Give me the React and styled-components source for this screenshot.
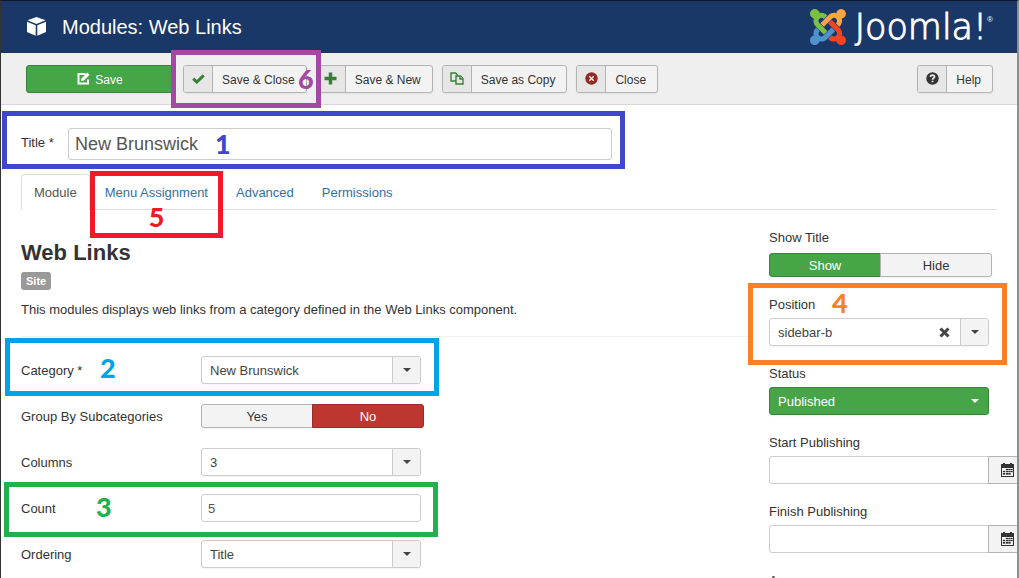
import React, { useState } from "react";
import styled, { createGlobalStyle, css } from "styled-components";

const GlobalStyle = createGlobalStyle`
  * {
    box-sizing: border-box;
  }
  html {
    overflow: hidden;
  }
  body {
    margin: 0;
    background: #fff;
    color: #333;
    font-family: "Liberation Sans", Arial, sans-serif;
    font-size: 13px;
    line-height: 20px;
  }
  button,
  input,
  select {
    margin: 0;
    font: inherit;
    color: inherit;
  }
`;

const Page = styled.div`
  height: 100vh;
  overflow: hidden;
  border: solid #333;
  border-width: 1px 2px 0 1px;
  border-top-color: #10182b;
  border-right-color: #8f8f8f;
`;
const Header = styled.header`
  display: flex;
  align-items: center;
  height: 52px;
  padding: 0 24px 0 25px;
  background: #1a3867;
  color: #fff;
`;
const Heading = styled.h1`
  flex: 1;
  margin: 0 0 0 15px;
  font-size: 20px;
  line-height: 24px;
  font-weight: normal;
`;
const Brand = styled.a`
  display: flex;
  align-items: center;
  color: #fff;
  text-decoration: none;
`;
const BrandName = styled.span`
  margin-left: 9px;
  font-family: "DejaVu Sans", sans-serif;
  font-weight: 200;
  font-size: 35px;
  line-height: 36px;
  -webkit-text-stroke: 1px #fff;
`;
const Registered = styled.sup`
  align-self: flex-start;
  font-size: 8px;
  line-height: 22px;
`;

const Toolbar = styled.div`
  display: flex;
  align-items: center;
  gap: 9px;
  height: 52px;
  padding: 0 24px 0 25px;
  background: #efefef;
  border-bottom: 1px solid #d8d8d8;
`;
const Spacer = styled.div`
  flex: 1;
`;
const ToolButton = styled.button`
  display: flex;
  align-items: center;
  height: 28px;
  padding: 0;
  overflow: hidden;
  background: #f3f3f3;
  border: 1px solid #b3b3b3;
  border-radius: 3px;
  box-shadow: 0 1px 2px rgba(0, 0, 0, 0.05);
  font-size: 12px;
  white-space: nowrap;
`;
const ToolIcon = styled.span`
  display: flex;
  align-items: center;
  justify-content: center;
  width: 29px;
  height: 26px;
  background: #e6e6e6;
  border-right: 1px solid #b3b3b3;
`;
const ToolText = styled.span`
  padding: 2px 11px 0 9px;
`;
const SaveButton = styled(ToolButton)`
  justify-content: center;
  gap: 5px;
  width: 148px;
  background: #46a546;
  border-color: #3a833a;
  color: #fff;
`;
const SaveText = styled.span`
  padding-top: 2px;
`;

/* numbered frame that lies over a part of the form */
const Mark = styled.span`
  position: absolute;
  top: ${(p) => p.$top}px;
  right: ${(p) => p.$right}px;
  bottom: ${(p) => p.$bottom}px;
  left: ${(p) => p.$left}px;
  border: 5px solid ${(p) => p.$color};
  color: ${(p) => p.$color};
  pointer-events: none;
  z-index: 5;
`;
const Digit = styled.b`
  position: absolute;
  top: ${(p) => p.$y}px;
  left: ${(p) => p.$x}px;
  font-family: Lato, sans-serif;
  font-weight: 900;
  font-size: 27px;
  line-height: 28px;
`;
const Marked = styled.div`
  position: relative;
`;

const Content = styled.main`
  padding: 23px 20px 0;
`;
const TitleRow = styled(Marked)`
  display: flex;
  width: 591px;
  max-width: 100%;
`;
const TitleLabel = styled.label`
  width: 47px;
  padding-top: 5px;
`;
const inputBase = css`
  border: 1px solid #ccc;
  border-radius: 3px;
  background: #fff;
  color: #555;
  outline: none;
`;
const TitleInput = styled.input`
  ${inputBase}
  flex: 1;
  min-width: 0;
  height: 32px;
  padding: 0 6px;
  font-size: 18px;
`;
const Tabs = styled.nav`
  display: flex;
  height: 36px;
  margin: 14px 0 18px;
  border-bottom: 1px solid #ddd;
`;
const Tab = styled.a`
  position: relative;
  height: 36px;
  margin-right: 2px;
  padding: 8px 12px 0;
  border: 1px solid transparent;
  border-radius: 4px 4px 0 0;
  color: #3071a9;
  text-decoration: none;
  ${(p) =>
    p.$active &&
    css`
      border-color: #ddd;
      border-bottom-color: #fff;
      background: #fff;
      color: #555;
    `}
`;

const Columns = styled.div`
  display: grid;
  grid-template-columns: minmax(0, 727fr) minmax(0, 228fr);
  gap: 21px;
`;
const ModuleName = styled.h2`
  margin: 13px 0 6px;
  font-size: 22px;
  line-height: 24px;
`;
const Badge = styled.span`
  display: inline-block;
  padding: 0 5px;
  background: #999;
  border-radius: 3px;
  color: #fff;
  font-size: 11px;
  font-weight: bold;
  line-height: 18px;
`;
const Description = styled.p`
  margin: 9px 0 16px;
`;
const Rule = styled.hr`
  margin: 0 0 19px;
  border: 0;
  border-top: 1px solid #eee;
`;
const Row = styled(Marked)`
  display: flex;
  align-items: center;
  height: 28px;
  margin-bottom: 18px;
`;
const RowLabel = styled.label`
  width: 180px;
  padding-top: 2px;
`;
const Field = styled(Marked)`
  margin-bottom: 18px;
`;
const FieldLabel = styled.label`
  display: block;
  margin-bottom: 3px;
`;
const TextInput = styled.input`
  ${inputBase}
  width: 220px;
  height: 28px;
  padding: 0 6px;
`;

const SelectWrap = styled.div`
  display: flex;
  position: relative;
  width: 220px;
`;
const SelectBox = styled.select`
  flex: 1;
  height: 28px;
  padding: 2px 8px 0;
  appearance: none;
  border: 1px solid ${(p) => (p.$green ? "#3a833a" : "#ccc")};
  border-radius: 3px;
  background: ${(p) => (p.$green ? "#46a546" : "#fff")};
  color: ${(p) => (p.$green ? "#fff" : "#444")};
  box-shadow: 0 1px 2px rgba(0, 0, 0, 0.05);
  outline: none;
`;
const SelectArrow = styled.span`
  position: absolute;
  top: 1px;
  right: 1px;
  bottom: 1px;
  display: flex;
  align-items: center;
  justify-content: center;
  width: 28px;
  border-left: 1px solid ${(p) => (p.$green ? "#46a546" : "#ccc")};
  border-radius: 0 2px 2px 0;
  background: ${(p) => (p.$green ? "#46a546" : "#f3f3f3")};
  color: ${(p) => (p.$green ? "#fff" : "#444")};
  pointer-events: none;
`;
const ClearButton = styled.button`
  position: absolute;
  top: 9px;
  right: 39px;
  display: flex;
  padding: 0;
  border: 0;
  background: none;
  color: #444;
`;

const Group = styled.div`
  display: flex;
  width: 223px;
  border-radius: 3px;
  box-shadow: 0 1px 2px rgba(0, 0, 0, 0.05);
  ${Field} & {
    margin-top: 5px;
  }
`;
const tones = {
  green: "background: #46a546; border-color: #3a833a; color: #fff;",
  red: "background: #bd362f; border-color: #9b2c27; color: #fff;",
};
const GroupButton = styled.button`
  flex: 1;
  height: 24px;
  padding: 2px 0 0;
  border: 1px solid #b3b3b3;
  background: #f3f3f3;
  &:first-child {
    border-radius: 3px 0 0 3px;
  }
  &:last-child {
    margin-left: -1px;
    border-radius: 0 3px 3px 0;
  }
  ${(p) => tones[p.$tone]}
`;

const DateRow = styled.div`
  display: flex;
  input {
    flex: none;
    border-radius: 3px 0 0 3px;
  }
`;
const DateButton = styled.button`
  display: flex;
  flex: none;
  align-items: center;
  justify-content: center;
  width: 38px;
  height: 28px;
  margin-left: -1px;
  padding: 0;
  border: 1px solid #b3b3b3;
  border-radius: 0 3px 3px 0;
  background: #f3f3f3;
`;

const CubeIcon = () => (
  <svg width="21" height="20" viewBox="0 1 21 20" fill="#fff">
    <path d="M10.5 1 19.5 4.3 10.5 8 1.5 4.3z" />
    <path d="M1 5.7 9.7 9.3V19.8L1 16z" />
    <path d="M20 5.7 11.3 9.3V19.8L20 16z" />
  </svg>
);
const JoomlaMark = () => (
  <svg width="36" height="36" viewBox="0 32 448 448">
    <path
      fill="#7ac143"
      d="M.6 92.1C.6 58.8 27.4 32 60.4 32c30 0 54.5 21.9 59.2 50.2 32.6-7.6 67.1.6 96.5 30l-44.3 44.3c-20.5-20.5-42.6-16.3-55.4-3.5-14.3 14.3-14.3 37.9 0 52.2l99.5 99.5-44 44.3c-87.7-87.2-49.7-49.7-99.8-99.7-26.8-26.5-35-64.8-24.8-98.9C20.4 144.6.6 120.7.6 92.1z"
    />
    <path
      fill="#f9a541"
      d="M130.1 208.5l44.3 44.3c10-10 89.7-89.7 99.7-99.8 14.3-14.3 37.6-14.3 51.9 0 12.8 12.8 17 35-3.5 55.4l44 44.3c31.2-31.2 38.5-67.6 28.9-101.2 29.2-4.1 51.9-29.2 51.9-59.5 0-33.2-26.8-60.1-59.8-60.1-30.3 0-55.4 22.5-59.5 51.6-33.8-9.9-71.7-1.5-98.3 25.1-18.3 19.1-71.1 71.5-99.6 99.9z"
    />
    <path
      fill="#f44321"
      d="M396.4 360.7c8.2-32.7-.9-68.5-26.3-93.9-11.8-12.2 5 4.7-99.5-99.7l-44.3 44.3 99.7 99.7c14.3 14.3 14.3 37.6 0 51.9-12.8 12.8-35 17-55.4-3.5l-44 44.3c27.6 30.2 68 38.8 102.7 28 5.5 27.4 29.7 48.1 58.9 48.1 33 0 59.8-26.8 59.8-60.1 0-30.2-22.5-55-51.6-59.1z"
    />
    <path
      fill="#5091cd"
      d="M312.1 307.6l-44-44.3c-87 86.4-50.4 50.4-99.7 99.8-14.3 14.3-37.6 14.3-51.9 0-13.1-13.4-16.9-35.3 3.2-55.4l-44-44.3c-30.2 30.2-38 65.2-29.5 98.3-26.7 6-46.2 29.9-46.2 58.2C0 453.2 26.8 480 59.8 480c28.6 0 52.5-19.8 58.6-46.7 32.7 8.2 68.5-.6 94.2-26 32.1-32 12.2-12.4 99.5-99.7z"
    />
  </svg>
);
const EditIcon = () => (
  <svg width="13" height="13" viewBox="0 0 13 13">
    <path d="M8.5 2h-7v9.5H11v-4" fill="none" stroke="#fff" strokeWidth="2" />
    <path d="M4 9l.6-2.8L10.4.4l2.3 2.3-5.8 5.7z" fill="#fff" />
  </svg>
);
const CheckIcon = () => (
  <svg width="13" height="10" viewBox="0 0 13 10">
    <path d="M1.2 4.6 4.8 8l6.9-6.7" fill="none" stroke="#378137" strokeWidth="3" />
  </svg>
);
const PlusIcon = () => (
  <svg width="13" height="13" viewBox="0 0 13 13">
    <path d="M6.5.5v12M.5 6.5h12" stroke="#378137" strokeWidth="3.5" />
  </svg>
);
const CopyIcon = () => (
  <svg width="14" height="13" viewBox="0 0 14 13" fill="#e6e6e6" stroke="#378137" strokeWidth="1.4">
    <path d="M1 1h4.500l2 2v6H1z" />
    <path d="M6 4h4.500L13 6.500V12H6z" />
    <path d="M10 4v3h3" />
  </svg>
);
const CloseIcon = () => (
  <svg width="13" height="13" viewBox="0 0 13 13">
    <circle cx="6.5" cy="6.5" r="6.2" fill="#942a25" />
    <path d="M4.3 4.3l4.4 4.4M8.7 4.3 4.3 8.7" stroke="#eee" strokeWidth="1.5" />
  </svg>
);
const HelpIcon = () => (
  <svg width="13" height="13" viewBox="0 0 13 13">
    <circle cx="6.5" cy="6.5" r="6.2" fill="#333" />
    <path
      d="M4.5 5c0-2.4 4-2.4 4-.2 0 1.4-2 1.4-2 2.9M6.500 8.800v1.500"
      fill="none"
      stroke="#e6e6e6"
      strokeWidth="1.8"
    />
  </svg>
);
const Caret = () => (
  <svg width="8" height="4" viewBox="0 0 8 4" fill="currentColor">
    <path d="M0 0h8L4 4z" />
  </svg>
);
const CrossIcon = () => (
  <svg width="11" height="11" viewBox="0 0 11 11">
    <path d="M1.5 1.5l8 8M9.500 1.500l-8 8" stroke="currentColor" strokeWidth="3" />
  </svg>
);
const CalendarIcon = () => (
  <svg width="13" height="14" viewBox="0 0 13 14">
    <path d="M0 1h13v13H0z" fill="#333" />
    <path d="M2 0h2v2H2zM9 0h2v2H9z" fill="#333" />
    <path d="M1 5h11v8H1z" fill="#f3f3f3" />
    <path
      d="M5 6h2v1H5zM7.5 6h2v1h-2zM10 6h1.500v1H10zM2 8h2v1H2zM5 8h2v1H5zM7.500 8h2v1h-2zM10 8h1.500v1H10zM2 10h2v1.500H2zM5 10h2v1.500H5zM7.500 10h2v1.500h-2z"
      fill="#333"
      stroke="#333"
      strokeWidth=".3"
    />
  </svg>
);

const Tool = ({ icon, children }) => (
  <ToolButton type="button">
    <ToolIcon>{icon}</ToolIcon>
    <ToolText>{children}</ToolText>
  </ToolButton>
);

const Select = ({ id, options, green, onClear }) => (
  <SelectWrap>
    <SelectBox id={id} $green={green}>
      {options.map((o) => (
        <option key={o}>{o}</option>
      ))}
    </SelectBox>
    {onClear && (
      <ClearButton type="button" aria-label="Clear" onClick={onClear}>
        <CrossIcon />
      </ClearButton>
    )}
    <SelectArrow $green={green}>
      <Caret />
    </SelectArrow>
  </SelectWrap>
);

const Switch = ({ labelledBy, options, value, onChange }) => (
  <Group role="group" aria-labelledby={labelledBy}>
    {options.map(([name, tone]) => (
      <GroupButton
        key={name}
        type="button"
        aria-pressed={value === name}
        $tone={value === name ? tone : undefined}
        onClick={() => onChange(name)}
      >
        {name}
      </GroupButton>
    ))}
  </Group>
);

const DateField = ({ id, label }) => (
  <Field>
    <FieldLabel htmlFor={id}>{label}</FieldLabel>
    <DateRow>
      <TextInput id={id} />
      <DateButton type="button" aria-label={label}>
        <CalendarIcon />
      </DateButton>
    </DateRow>
  </Field>
);

const App = () => {
  const [group, setGroup] = useState("No");
  const [show, setShow] = useState("Show");
  const [positions, setPositions] = useState(["sidebar-b"]);

  return (
    <Page>
      <GlobalStyle />
      <Header>
        <CubeIcon />
        <Heading>Modules: Web Links</Heading>
        <Brand href="#" aria-label="Joomla!">
          <JoomlaMark />
          <BrandName>Joomla!</BrandName>
          <Registered>®</Registered>
        </Brand>
      </Header>
      <Toolbar>
        <SaveButton type="button">
          <EditIcon />
          <SaveText>Save</SaveText>
        </SaveButton>
        <Marked>
          <Tool icon={<CheckIcon />}>Save &amp; Close</Tool>
          <Mark $top={-15} $right={-14} $bottom={-15} $left={-12} $color="#a349a4">
            <Digit $x={122} $y={10}>
              6
            </Digit>
          </Mark>
        </Marked>
        <Tool icon={<PlusIcon />}>Save &amp; New</Tool>
        <Tool icon={<CopyIcon />}>Save as Copy</Tool>
        <Tool icon={<CloseIcon />}>Close</Tool>
        <Spacer />
        <Tool icon={<HelpIcon />}>Help</Tool>
      </Toolbar>

      <Content>
        <TitleRow>
          <TitleLabel htmlFor="title">Title *</TitleLabel>
          <TitleInput id="title" defaultValue="New Brunswick" />
          <Mark $top={-17} $right={-13} $bottom={-9} $left={-19} $color="#3f48cc">
            <Digit $x={208} $y={14}>
              1
            </Digit>
          </Mark>
        </TitleRow>
        <Tabs>
          <Tab href="#module" $active>
            Module
          </Tab>
          <Tab href="#assignment">
            Menu Assignment
            <Mark $top={-4} $right={-3} $bottom={-29} $left={-3} $color="#ed1c24">
              <Digit $x={54} $y={27}>
                5
              </Digit>
            </Mark>
          </Tab>
          <Tab href="#advanced">Advanced</Tab>
          <Tab href="#permissions">Permissions</Tab>
        </Tabs>

        <Columns>
          <section>
            <ModuleName>Web Links</ModuleName>
            <Badge>Site</Badge>
            <Description>
              This modules displays web links from a category defined in the Web
              Links component.
            </Description>
            <Rule />
            <Row>
              <RowLabel htmlFor="category">Category *</RowLabel>
              <Select id="category" options={["New Brunswick"]} />
              <Mark $top={-18} $right={309} $bottom={-12} $left={-16} $color="#00a2e8">
                <Digit $x={90} $y={11}>
                  2
                </Digit>
              </Mark>
            </Row>
            <Row>
              <RowLabel as="span" id="group">
                Group By Subcategories
              </RowLabel>
              <Switch
                labelledBy="group"
                options={[
                  ["Yes", "green"],
                  ["No", "red"],
                ]}
                value={group}
                onChange={setGroup}
              />
            </Row>
            <Row>
              <RowLabel htmlFor="columns">Columns</RowLabel>
              <Select id="columns" options={["3"]} />
            </Row>
            <Row>
              <RowLabel htmlFor="count">Count</RowLabel>
              <TextInput id="count" defaultValue="5" />
              <Mark $top={-12} $right={310} $bottom={-15} $left={-17} $color="#22b14c">
                <Digit $x={87} $y={6}>
                  3
                </Digit>
              </Mark>
            </Row>
            <Row>
              <RowLabel htmlFor="ordering">Ordering</RowLabel>
              <Select id="ordering" options={["Title"]} />
            </Row>
          </section>

          <aside>
            <Field>
              <FieldLabel as="div" id="show-title">
                Show Title
              </FieldLabel>
              <Switch
                labelledBy="show-title"
                options={[
                  ["Show", "green"],
                  ["Hide", "red"],
                ]}
                value={show}
                onChange={setShow}
              />
            </Field>
            <Field>
              <FieldLabel htmlFor="position">Position</FieldLabel>
              <Select
                id="position"
                options={positions}
                onClear={() => setPositions([""])}
              />
              <Mark $top={-12} $right={-10} $bottom={-19} $left={-21} $color="#ff7f27">
                <Digit $x={79} $y={1}>
                  4
                </Digit>
              </Mark>
            </Field>
            <Field>
              <FieldLabel htmlFor="status">Status</FieldLabel>
              <Select id="status" options={["Published"]} green />
            </Field>
            <DateField id="start" label="Start Publishing" />
            <DateField id="finish" label="Finish Publishing" />
            <Field>
              <FieldLabel htmlFor="access">Access</FieldLabel>
              <Select id="access" options={["Public"]} />
            </Field>
          </aside>
        </Columns>
      </Content>
    </Page>
  );
};

export default App;
